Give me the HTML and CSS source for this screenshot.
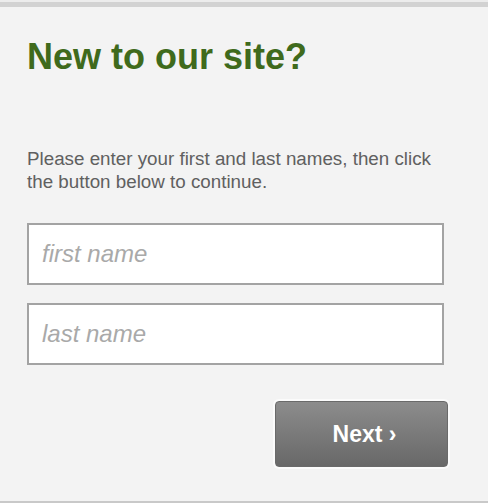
FILE: index.html
```html
<!DOCTYPE html>
<html>
<head>
<meta charset="utf-8">
<link rel="stylesheet" href="styles.css">
</head>
<body>
<div class="panel">
  <h1 class="title">New to our site?</h1>
  <p class="intro">Please enter your first and last names, then click the button below to continue.</p>
  <form class="form">
    <input class="field" type="text" placeholder="first name">
    <input class="field" type="text" placeholder="last name">
    <div class="actions">
      <button class="next" type="button">Next ›</button>
    </div>
  </form>
</div>
</body>
</html>
```
FILE: styles.css
```css
html, body {
  margin: 0;
  padding: 0;
  background: #ececec;
  height: 503px;
  overflow: hidden;
}
.panel {
  box-sizing: border-box;
  margin-top: 2px;
  height: 501px;
  background: #f3f3f3;
  border-top: 5px solid #d2d2d2;
  border-bottom: 2px solid #c9c9c9;
  padding: 30px 0 0 27px;
  font-family: "Liberation Sans", Arial, sans-serif;
}
.title {
  margin: 0;
  font-size: 36px;
  line-height: 40px;
  font-weight: bold;
  color: #3f6a1c;
}
.intro {
  margin: 70px 0 0;
  width: 420px;
  font-size: 18.8px;
  line-height: 23px;
  color: #606060;
}
.form {
  margin-top: 30px;
  display: flex;
  flex-direction: column;
  gap: 18px;
  width: 421px;
}
.field {
  box-sizing: border-box;
  width: 417px;
  height: 62px;
  margin: 0;
  border: 2px solid #a3a3a3;
  background: #fff;
  padding: 0 13px;
  font-family: "Liberation Sans", Arial, sans-serif;
  font-size: 24px;
  font-style: italic;
  color: #444;
  outline: none;
}
.field::placeholder {
  color: #a9a9a9;
  font-style: italic;
}
.actions {
  display: flex;
  justify-content: flex-end;
  margin-top: 18px;
}
.next {
  box-sizing: border-box;
  width: 173px;
  height: 66px;
  border: 1px solid #6a6a6a;
  border-radius: 4px;
  background: linear-gradient(#8c8c8c, #686868);
  box-shadow: 0 0 0 2px #fbfbfb;
  color: #fff;
  font-family: "Liberation Sans", Arial, sans-serif;
  font-size: 23px;
  font-weight: bold;
  padding: 0 0 0 6px;
}
```
